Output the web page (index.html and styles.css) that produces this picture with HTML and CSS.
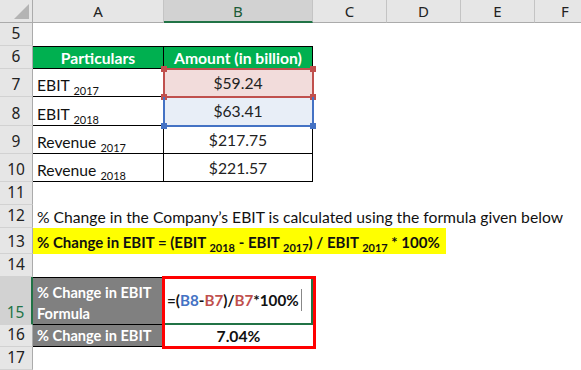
FILE: index.html
```html
<!DOCTYPE html>
<html>
<head>
<meta charset="utf-8">
<link rel="stylesheet" href="styles.css">
</head>
<body>
<div class="sheet">
  <!-- header row -->
  <div class="corner"><span class="tri"></span></div>
  <div class="colh">A</div>
  <div class="colh sel">B</div>
  <div class="colh">C</div>
  <div class="colh">D</div>
  <div class="colh">E</div>
  <div class="colh last">F</div>

  <!-- row 5 -->
  <div class="rowh">5</div>
  <div class="span6"></div>

  <!-- row 6 -->
  <div class="rowh">6</div>
  <div class="cell th first top"><span>Particulars</span></div>
  <div class="cell th top"><span>Amount (in billion)</span></div>
  <div class="span4"></div>

  <!-- row 7 -->
  <div class="rowh">7</div>
  <div class="cell tb first"><span>EBIT <sub>2017</sub></span></div>
  <div class="cell tb num pink"><span>$59.24</span></div>
  <div class="span4"></div>

  <!-- row 8 -->
  <div class="rowh">8</div>
  <div class="cell tb first"><span>EBIT <sub>2018</sub></span></div>
  <div class="cell tb num blue"><span>$63.41</span></div>
  <div class="span4"></div>

  <!-- row 9 -->
  <div class="rowh">9</div>
  <div class="cell tb first"><span>Revenue <sub>2017</sub></span></div>
  <div class="cell tb num"><span>$217.75</span></div>
  <div class="span4"></div>

  <!-- row 10 -->
  <div class="rowh">10</div>
  <div class="cell tb first"><span>Revenue <sub>2018</sub></span></div>
  <div class="cell tb num"><span>$221.57</span></div>
  <div class="span4"></div>

  <!-- row 11 -->
  <div class="rowh">11</div>
  <div class="span6"></div>

  <!-- row 12 -->
  <div class="rowh">12</div>
  <div class="span6 text"><span>% Change in the Company’s EBIT is calculated using the formula given below</span></div>

  <!-- row 13 -->
  <div class="rowh">13</div>
  <div class="span6"><div class="hl"><span>% Change in EBIT = (EBIT <sub>2018</sub> - EBIT <sub>2017</sub>) / EBIT <sub>2017</sub> * 100%</span></div></div>

  <!-- row 14 -->
  <div class="rowh">14</div>
  <div class="span6"></div>

  <!-- row 15 -->
  <div class="rowh selr">15</div>
  <div class="cell gray two">% Change in EBIT<br>Formula</div>
  <div class="cell edit"><span class="f">=(<span class="rb">B8</span>-<span class="rr">B7</span>)/<span class="rr">B7</span>*100%</span><span class="caret"></span></div>
  <div class="span4"></div>

  <!-- row 16 -->
  <div class="rowh">16</div>
  <div class="cell gray g16"><span>% Change in EBIT</span></div>
  <div class="cell res"><span>7.04%</span></div>
  <div class="span4"></div>

  <!-- row 17 -->
  <div class="rowh">17</div>
  <div class="span6"></div>

  <!-- overlays -->
  <div class="refbox red-ref">
    <span class="h tl"></span><span class="h tr"></span><span class="h bl"></span><span class="h br"></span>
  </div>
  <div class="refbox blue-ref">
    <span class="h bl"></span><span class="h br"></span>
  </div>
  <div class="redbox"></div>
</div>
</body>
</html>
```

FILE: styles.css
```css
* { box-sizing: border-box; }
html, body { margin: 0; padding: 0; background: #fff; }
body { font-family: Lato, "Open Sans", sans-serif; font-size: 15.7px; color: #111; overflow: hidden; }

.sheet {
  position: relative;
  display: grid;
  grid-template-columns: 33px 131px 149px 74px 74px 74px 60px;
  grid-template-rows: 23px 23px 23px 28px 29px 28px 28px 23px 23px 26px 23px 48px 22px 23px;
  width: 581px;
  height: 370px;
  overflow: hidden;
}

.corner { background: #e6e6e6; border-right: 1px solid #ababab; border-bottom: 1px solid #ababab; position: relative; }
.tri { position: absolute; right: 3px; bottom: 3px; width: 0; height: 0; border-left: 15px solid transparent; border-bottom: 15px solid #b4b4b4; }

.colh {
  background: #e6e6e6;
  border-right: 1px solid #c4c4c4;
  border-bottom: 1px solid #ababab;
  display: flex; align-items: center; justify-content: center;
  color: #222; font-size: 15px;
  font-family: "Noto Sans", sans-serif;
}
.colh.sel { background: #d2d2d2; border-bottom: 2px solid #217346; color: #1c5b37; }
.colh.last { border-right: none; }

.rowh {
  background: #e6e6e6;
  border-right: 1px solid #ababab;
  border-bottom: 1px solid #d2d2d2;
  display: flex; align-items: flex-end; justify-content: center;
  padding-bottom: 1px;
  color: #222; font-size: 15.5px;
  font-family: "Noto Sans", sans-serif;
}
.rowh.selr { background: #d2d2d2; color: #217346; border-right: 2px solid #217346; }

.span6 { grid-column: 2 / 8; }
.span4 { grid-column: 4 / 8; }

.cell { display: flex; align-items: flex-end; padding: 0 4px 2px 4px; white-space: nowrap; }
.th { background: #00b050; color: #fff; font-weight: bold; justify-content: center; align-items: center; padding: 0; border-right: 1px solid #000; border-bottom: 1px solid #000; }
.th.top { border-top: 1px solid #000; }
.tb { border-right: 1px solid #000; border-bottom: 1px solid #000; }
.num { justify-content: center; align-items: center; padding: 0; color: #222; }
.pink { background: #f2dcdb; }
.blue { background: #e8eef7; }

sub { font-size: 11px; vertical-align: -4px; line-height: 0; }

.text { display: flex; align-items: flex-end; padding: 0 0 2px 4px; white-space: nowrap; }
.hl { background: #ffff00; width: 413px; height: 100%; font-weight: bold; font-size: 15px; white-space: nowrap; padding: 2px 0 0 4px; display: flex; align-items: center; }

.gray { background: #808080; color: #fff; font-weight: bold; font-size: 14.6px; border-right: 1px solid #000; border-bottom: 1px solid #000; }
.two { white-space: nowrap; display: block; line-height: 21px; padding: 4px 4px 0 4px; border-top: 1px solid #000; }
.g16 { align-items: center; padding: 0 4px; }

.edit { font-weight: bold; font-size: 15.2px; align-items: center; padding: 0 0 0 3px; border-right: 2px solid #217346; border-bottom: 2px solid #217346; color: #111; }
.rb { color: #4472c4; }
.rr { color: #c0504d; }
.caret { display: inline-block; width: 1px; height: 22px; background: #888; margin-left: 2px; }

.res { font-weight: bold; justify-content: center; align-items: center; padding: 0; }

.refbox { position: absolute; }
.red-ref { left: 163px; top: 68px; width: 151px; height: 30px; border: 2px solid #c0504d; }
.blue-ref { left: 163px; top: 97px; width: 151px; height: 30px; border: 2px solid #4472c4; border-top: none; }
.h { position: absolute; width: 6px; height: 6px; }
.red-ref .h { background: #c0504d; }
.blue-ref .h { background: #4472c4; }
.h.tl { left: -4px; top: -4px; }
.h.tr { right: -4px; top: -4px; }
.h.bl { left: -4px; bottom: -4px; }
.h.br { right: -4px; bottom: -4px; }

.redbox { position: absolute; left: 162px; top: 276px; width: 154px; height: 73px; border: 3px solid #ff0000; }
```
